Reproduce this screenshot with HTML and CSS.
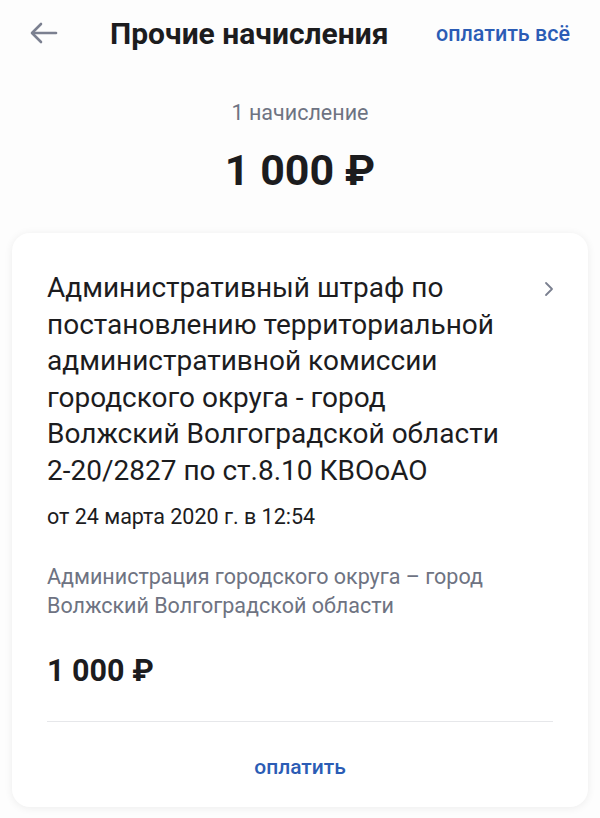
FILE: index.html
```html
<!DOCTYPE html>
<html lang="ru">

<head>
    <meta charset="UTF-8">
    <meta name="viewport" content="width=device-width, initial-scale=1.0">
    <title>Прочие начисления</title>
    <link rel="stylesheet" href="styles.css">
</head>

<body>
    <!-- Шапка -->
    <header class="topbar">
        <button class="btn-back" aria-label="Назад">
            <svg width="28" height="22" viewBox="0 0 28 22" fill="none" stroke="#7b8090" stroke-width="2.6" stroke-linecap="round" stroke-linejoin="round">
                <path d="M26 11H3"/>
                <path d="M11 2L2 11l9 9"/>
            </svg>
        </button>
        <h1 class="topbar-title">Прочие начисления</h1>
        <a class="link-pay-all" href="#">оплатить всё</a>
    </header>

    <!-- Итог -->
    <section class="summary">
        <div class="summary-count">1 начисление</div>
        <div class="summary-total">1 000 ₽</div>
    </section>

    <!-- Начисление -->
    <div class="charge-card">
        <div class="charge-head">
            <div class="charge-title">Административный штраф по постановлению территориальной административной комиссии городского округа - город Волжский Волгоградской области 2-20/2827 по ст.8.10 КВОоАО</div>
            <svg class="chevron" width="12" height="16" viewBox="0 0 12 16" fill="none" stroke="#7b8090" stroke-width="1.8" stroke-linecap="round" stroke-linejoin="round">
                <path d="M3 2l6 6-6 6"/>
            </svg>
        </div>
        <div class="charge-date">от 24 марта 2020 г. в 12:54</div>
        <div class="charge-org">Администрация городского округа – город Волжский Волгоградской области</div>
        <div class="charge-sum">1 000 ₽</div>
        <div class="charge-actions">
            <a class="link-pay" href="#">оплатить</a>
        </div>
    </div>
</body>

</html>
```

FILE: styles.css
```css
body {
    font-family: Roboto, "Noto Sans", sans-serif;
    margin: 0;
    padding: 0;
    background-color: #fdfdfd;
    color: #1c1c1e;
}

a {
    color: #2b5cb5;
    text-decoration: none;
}

.topbar {
    display: flex;
    align-items: center;
    height: 66px;
    padding: 0 30px 0 30px;
}

.btn-back {
    background: none;
    border: none;
    padding: 0;
    width: 80px;
    display: flex;
    align-items: center;
    cursor: pointer;
}

.topbar-title {
    flex: 1;
    margin: 0;
    font-size: 30px;
    font-weight: 700;
    color: #1c1c1e;
}

.link-pay-all {
    font-size: 21.5px;
    font-weight: 500;
}

.summary {
    text-align: center;
    padding-top: 34px;
}

.summary-count {
    font-size: 21.5px;
    line-height: 26px;
    color: #6e7382;
}

.summary-total {
    font-size: 43px;
    line-height: 50px;
    font-weight: 700;
    margin-top: 19px;
}

.charge-card {
    margin: 38px 12px 10px;
    padding: 37px 35px 14px;
    background: #fff;
    border-radius: 18px;
    box-shadow: 0 1px 8px rgba(0, 0, 0, 0.07);
}

.charge-head {
    display: flex;
    align-items: flex-start;
    gap: 38px;
}

.charge-title {
    flex: 1;
    font-size: 28px;
    line-height: 36.5px;
}

.chevron {
    margin-top: 11px;
    margin-right: -2px;
}

.charge-date {
    font-size: 21.5px;
    line-height: 26px;
    margin-top: 15px;
}

.charge-org {
    font-size: 21.5px;
    line-height: 29px;
    color: #6e7382;
    margin-top: 32px;
}

.charge-sum {
    font-size: 30.5px;
    line-height: 36px;
    font-weight: 700;
    margin-top: 33px;
    padding-bottom: 32px;
    border-bottom: 1px solid #e6e7ea;
}

.charge-actions {
    text-align: center;
    padding: 32px 0 13px;
}

.link-pay {
    font-size: 21px;
    line-height: 26px;
    font-weight: 500;
}
```
